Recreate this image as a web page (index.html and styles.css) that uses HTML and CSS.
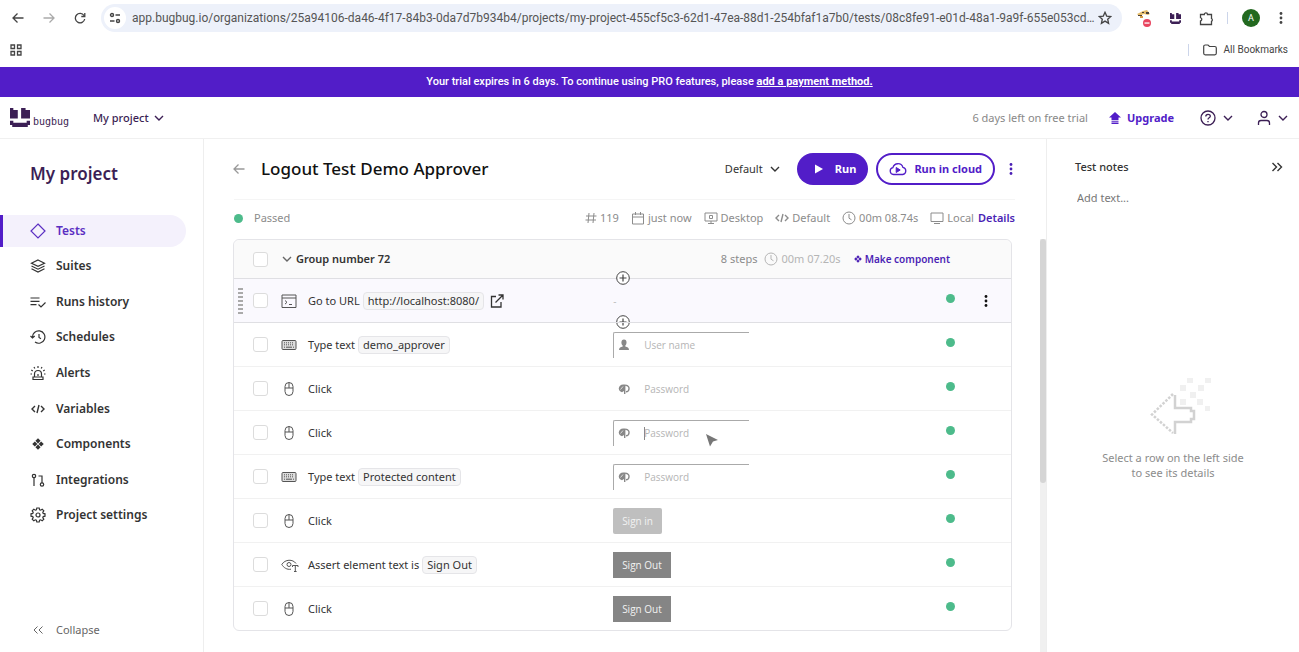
FILE: index.html
```html
<!DOCTYPE html>
<html lang="en">
<head>
<meta charset="utf-8">
<title>Logout Test Demo Approver - BugBug</title>
<link rel="stylesheet" href="styles.css">
</head>
<body>
<svg class="sprite" aria-hidden="true">
  <symbol id="i-chev" viewBox="0 0 10 10"><path stroke-width="1.400" d="M1 3l4 4 4-4"/></symbol>
  <symbol id="i-back" viewBox="0 0 12 12"><path stroke-width="1.300" d="M11.500 6H1M5.500 1.500L1 6l4.500 4.500"/></symbol>
  <symbol id="i-dots" viewBox="0 0 4 14"><g fill="currentColor" stroke="none"><circle cx="2" cy="2.500" r="1.400"/><circle cx="2" cy="7" r="1.400"/><circle cx="2" cy="11.500" r="1.400"/></g></symbol>
  <symbol id="i-clock" viewBox="0 0 14 14"><circle cx="7" cy="7" r="6"/><path d="M7 3v4.200l2.500 1.600"/></symbol>
  <symbol id="i-code" viewBox="0 0 14 14"><path stroke-width="1.400" d="M4 4L1 7l3 3M10 4l3 3-3 3M8 3L6 11"/></symbol>
  <symbol id="i-comp" viewBox="0 0 14 14"><g fill="currentColor" stroke="none"><path d="M7 .3l3 3-3 3-3-3zM7 7.700l3 3-3 3-3-3zM3.300 4l3 3-3 3-3-3zM10.700 4l3 3-3 3-3-3z"/></g></symbol>
  <symbol id="i-mouse" viewBox="0 0 16 16"><rect x="4" y="1.500" width="8" height="13" rx="4"/><path d="M4 7h8M8 1.500V7"/></symbol>
  <symbol id="i-key" viewBox="0 0 16 16"><rect x="1" y="3.500" width="14" height="9" rx="1" fill="#ddd"/><path stroke-dasharray="1 1" d="M3 5.800h10M3 7.800h10"/><path d="M3 10.200h1M5 10.200h6M12 10.200h1"/></symbol>
  <symbol id="i-pass" viewBox="0 0 12 12"><path fill="currentColor" stroke="none" d="M6 1.500C3 1 .8 3.300.8 5.500S2.500 9 4 9.200L6 8z"/><path stroke="#fff" stroke-width=".7" d="M2.500 6.500L5 3.500"/><path stroke-width="1.400" d="M6.700 1.500v9.500M7.500 2.300c3 .3 3.700 2 3.500 3.700S9.500 8.800 8 8.800"/></symbol>
  <symbol id="i-bug" viewBox="0 0 18 18"><g fill="currentColor" stroke="none"><path d="M0 0h3v2h4v8H0zM10 0h4v2h4v8h-8zM0 12h3v2h12v-2h3v4h-2v2H2v-2H0z"/></g></symbol>
  <symbol id="i-plus" viewBox="0 0 14 14"><circle cx="7" cy="7" r="6.300" fill="#fff"/><path stroke-width="1.200" d="M7 3.500v7M3.500 7h7"/></symbol>
</svg>

<div class="browser">
  <div class="toolbar">
    <button class="ico" aria-label="Back"><svg width="12" height="12"><use href="#i-back"/></svg></button>
    <button class="ico faded flip" aria-label="Forward"><svg width="12" height="12"><use href="#i-back"/></svg></button>
    <button class="ico" aria-label="Reload"><svg width="12" height="12" viewBox="0 0 12 12"><path stroke-width="1.300" d="M10 3.500A4.700 4.700 0 1 0 10.700 7M10.800 1v3.500H7.300"/></svg></button>
    <div class="omnibox">
      <button class="site" aria-label="Site information"><svg width="12" height="12" viewBox="0 0 12 12"><g stroke-width="1.400"><circle cx="3" cy="3" r="1.500"/><path d="M6.500 3H11M1 9h4.500"/><circle cx="9" cy="9" r="1.500"/></g></svg></button>
      <input class="url" aria-label="Address" value="app.bugbug.io/organizations/25a94106-da46-4f17-84b3-0da7d7b934b4/projects/my-project-455cf5c3-62d1-47ea-88d1-254bfaf1a7b0/tests/08c8fe91-e01d-48a1-9a9f-655e053cd…">
      <button aria-label="Bookmark"><svg width="14" height="14" viewBox="0 0 14 14"><path stroke-width="1.300" d="M7 1.300l1.700 3.800 4.100.4-3.100 2.700.9 4.100L7 10.100l-3.600 2.200.9-4.100L1.200 5.500l4.100-.4z"/></svg></button>
    </div>
    <div class="extensions">
      <button class="ico" aria-label="Blocked extension"><svg width="18" height="20" viewBox="0 0 18 20"><g stroke="none"><path d="M2 6l6-3 4-1 3 4-2 1-4-1-5 2z" fill="#e6bd6b"/><path d="M7 4h2v1H7zM11 4h3v2h-3zM3 7h4v1H3z" fill="#4a4038"/><path d="M5 8h3v2H5z" fill="#d79b45"/><circle cx="12" cy="15" r="4" fill="#e8455f"/><path d="M9.500 14.400h5v1.300h-5z" fill="#fff"/></g></svg></button>
      <button class="ico bug" aria-label="BugBug extension"><svg width="11" height="11"><use href="#i-bug"/></svg></button>
      <button class="ico" aria-label="Extensions"><svg width="15" height="15" viewBox="0 0 15 15"><path stroke-width="1.300" d="M1.500 3.500h3.800a1.600 1.600 0 0 1 3.200 0h4v4a1.600 1.600 0 0 1 0 2.800v3.200h-11V10a1.700 1.700 0 0 0 0-3.300z"/></svg></button>
      <i class="bar"></i>
      <button class="avatar" aria-label="Profile">A</button>
      <button class="ico" aria-label="Browser menu"><svg width="4" height="14"><use href="#i-dots"/></svg></button>
    </div>
  </div>
  <div class="bookmarks">
    <button class="ico" aria-label="Apps"><svg width="12" height="12" viewBox="0 0 12 12"><path stroke-width="1.300" d="M1 1h3.500v3.500H1zM7.500 1H11v3.500H7.500zM1 7.500h3.500V11H1zM7.500 7.500H11V11H7.500z"/></svg></button>
    <i class="bar"></i>
    <button class="folder"><svg width="14" height="12" viewBox="0 0 14 12"><path stroke-width="1.200" d="M.7 2.500a1.500 1.500 0 0 1 1.500-1.500H5l1.500 1.500h5.300a1.500 1.500 0 0 1 1.500 1.500v5.300a1.500 1.500 0 0 1-1.500 1.500H2.200a1.500 1.500 0 0 1-1.500-1.500z"/></svg>All Bookmarks</button>
  </div>
</div>

<div class="banner">Your trial expires in 6 days. To continue using PRO features, please <a href="#pay">add a payment method.</a></div>

<header class="top">
  <a class="logo" href="#home"><svg width="20" height="19" viewBox="0 0 18 18" preserveAspectRatio="none"><use href="#i-bug"/></svg><span>bugbug</span></a>
  <button class="project">My project <svg width="10" height="10"><use href="#i-chev"/></svg></button>
  <span class="trial">6 days left on free trial</span>
  <a class="upgrade" href="#upgrade"><svg width="12" height="12" viewBox="0 0 12 12"><path fill="currentColor" stroke="none" d="M6 0l6 5.500H9.500V8h-7V5.500H0zM2.500 8.700h7v1h-7zM2.500 10.500h7V12h-7z"/></svg>Upgrade</a>
  <button class="pair help" aria-label="Help"><svg width="16" height="16" viewBox="0 0 16 16"><g stroke-width="1.300"><circle cx="8" cy="8" r="7"/><path d="M5.800 6.500c0-3 4.500-2.800 4.500-.3C10.300 7.800 8 7.800 8 9.500M8 11v1.300"/></g></svg><svg width="10" height="10"><use href="#i-chev"/></svg></button>
  <button class="pair" aria-label="Account"><svg width="14" height="16" viewBox="0 0 14 16"><g stroke-width="1.300"><circle cx="7" cy="4.500" r="3"/><path d="M1.500 15v-2c0-1.500 1-2.500 2.500-2.500h6c1.500 0 2.500 1 2.500 2.500v2"/></g></svg><svg width="10" height="10"><use href="#i-chev"/></svg></button>
</header>

<div class="app">
  <aside class="side">
    <h2>My project</h2>
    <nav>
      <a class="on" href="#tests"><svg width="16" height="16" viewBox="0 0 16 16"><path d="M8 1l7 7-7 7-7-7z"/></svg>Tests</a>
      <a href="#suites"><svg width="16" height="16" viewBox="0 0 16 16"><path d="M8 2l6.500 3.200L8 8.400 1.500 5.200zM1.500 8L8 11.200 14.500 8M1.500 10.800L8 14l6.500-3.200"/></svg>Suites</a>
      <a href="#runs"><svg width="16" height="16" viewBox="0 0 16 16"><path d="M.5 4h9M.5 7.300h9M.5 10.600h6M8.500 10.500l2.500 2.500 4.500-4.500"/></svg>Runs history</a>
      <a href="#schedules"><svg width="16" height="16" viewBox="0 0 16 16"><path d="M2.500 8.500A6.200 6.200 0 1 1 5 13M.5 7l2 2 2.200-2M9 5v3.500l2 1.200"/></svg>Schedules</a>
      <a href="#alerts"><svg width="16" height="16" viewBox="0 0 16 16"><path d="M4.500 12V9a3.500 3.500 0 0 1 7 0v3M3 12h10v2.500H3zM8 9v2M8 1v2M4 2l.8 1.500M12 2l-.8 1.500M1.300 5l1.500 1M14.700 5l-1.500 1M.5 9H2M14 9h1.500"/></svg>Alerts</a>
      <a href="#variables"><svg width="16" height="14"><use href="#i-code"/></svg>Variables</a>
      <a href="#components"><svg width="16" height="12"><use href="#i-comp"/></svg>Components</a>
      <a href="#integrations"><svg width="16" height="16" viewBox="0 0 16 16"><circle cx="4" cy="4" r="1.700"/><path d="M4 6v8M8.500 4H12v7"/><circle cx="12" cy="12.500" r="1.700"/></svg>Integrations</a>
      <a href="#settings"><svg width="16" height="16" viewBox="0 0 16 16"><circle cx="8" cy="8" r="2"/><path d="M6.800 1h2.400l.4 1.800 1 .4 1.600-1 1.600 1.600-1 1.600.4 1 1.800.4v2.400l-1.800.4-.4 1 1 1.600-1.600 1.600-1.600-1-1 .4L9.200 15H6.800l-.4-1.800-1-.4-1.600 1-1.600-1.600 1-1.600-.4-1L1 9.200V6.800l1.800-.4.4-1-1-1.600 1.600-1.600 1.600 1 1-.4z"/></svg>Project settings</a>
    </nav>
    <button class="collapse"><svg width="16" height="10" viewBox="0 0 16 10"><path d="M7.500 1.500L4 5l3.500 3.500M12.500 1.500L9 5l3.500 3.500"/></svg>Collapse</button>
  </aside>

  <main class="main">
    <div class="title">
      <button class="ico back" aria-label="Go back"><svg width="12" height="12"><use href="#i-back"/></svg></button>
      <h1>Logout Test Demo Approver</h1>
      <label class="profile"><select aria-label="Run profile"><option>Default</option></select><svg width="10" height="10"><use href="#i-chev"/></svg></label>
      <button class="run"><svg width="9" height="10" viewBox="0 0 9 10"><path d="M1 .5L9 5 1 9.500z" fill="#fff" stroke="none"/></svg>Run</button>
      <button class="cloud"><svg width="18" height="14" viewBox="0 0 18 14"><path stroke-width="1.300" d="M4.500 12.500a3.500 3.500 0 0 1-.6-6.900 5.200 5.200 0 0 1 10-.2 3.600 3.600 0 0 1-.2 7.100z"/><path d="M7.200 5.500l4 2.500-4 2.500z" fill="currentColor"/></svg>Run in cloud</button>
      <button class="ico more" aria-label="More actions"><svg width="4" height="14"><use href="#i-dots"/></svg></button>
    </div>

    <div class="status">
      <i class="dot"></i><span class="passed">Passed</span>
      <span class="meta"><svg width="12" height="12" viewBox="0 0 12 12"><path d="M4 1L3 11M9 1L8 11M1 4h10.500M.5 8H11"/></svg>119</span>
      <span class="meta"><svg width="14" height="14" viewBox="0 0 14 14"><path d="M1.500 3h11v10h-11zM1.500 6h11M4.500 1v3M9.500 1v3"/></svg>just now</span>
      <span class="meta"><svg width="14" height="14" viewBox="0 0 14 14"><path d="M1 2h12v8H1zM7 10v2.500M4 12.500h6M5.500 4.500h3v3h-3z"/></svg>Desktop</span>
      <span class="meta"><svg width="14" height="14"><use href="#i-code"/></svg>Default</span>
      <span class="meta"><svg width="14" height="14"><use href="#i-clock"/></svg>00m 08.74s</span>
      <span class="meta"><svg width="14" height="14" viewBox="0 0 14 14"><path d="M1 2h12v8.500H1zM4 12.500h6"/></svg>Local</span>
      <a href="#details">Details</a>
    </div>

    <div class="scroll">
      <section class="card">
        <div class="group">
          <input type="checkbox" aria-label="Select group">
          <button class="toggle"><svg width="10" height="10"><use href="#i-chev"/></svg>Group number 72</button>
          <span class="count">8 steps</span>
          <span class="time"><svg width="14" height="14"><use href="#i-clock"/></svg>00m 07.20s</span>
          <button class="make"><svg width="8" height="8"><use href="#i-comp"/></svg>Make component</button>
        </div>
        <ul class="steps">
          <li class="hover">
            <button class="add before" aria-label="Add step before"><svg width="14" height="14"><use href="#i-plus"/></svg></button>
            <i class="grip"></i><input type="checkbox" aria-label="Select step 1">
            <svg width="16" height="16" viewBox="0 0 16 16"><path d="M1 2h14v12.500H1zM1 5h14M4 7.500l2 1.800-2 1.800M8 11.500h3"/></svg>
            <div class="what">Go to URL <code>http://localhost:8080/</code><a href="#open" aria-label="Open URL"><svg width="14" height="14" viewBox="0 0 14 14"><path stroke-width="1.300" d="M6 2.500H1.500v10.500H11V8M8.500 1H13v4.500M13 1L5.500 8.500"/></svg></a></div>
            <div class="shot"><span class="none">-</span></div><i class="dot"></i>
            <button class="ico kebab" aria-label="Step menu"><svg width="4" height="14"><use href="#i-dots"/></svg></button>
            <button class="add after" aria-label="Add step after"><svg width="14" height="14"><use href="#i-plus"/></svg></button>
          </li>
          <li><i></i><input type="checkbox" aria-label="Select step 2"><svg width="16" height="16"><use href="#i-key"/></svg><div class="what">Type text <code>demo_approver</code></div>
            <div class="shot"><span class="field framed"><svg width="12" height="12" viewBox="0 0 12 12"><path d="M6 .5c3.600 0 2.800 5 1.300 6v1c2 .5 3.700 1 3.700 3.500H1C1 8.500 2.700 8 4.700 7.500v-1C3.200 5.500 2.400.5 6 .5z" fill="currentColor" stroke="none"/></svg>User name</span></div><i class="dot"></i></li>
          <li><i></i><input type="checkbox" aria-label="Select step 3"><svg width="16" height="16"><use href="#i-mouse"/></svg><div class="what">Click</div>
            <div class="shot"><span class="field"><svg width="12" height="12"><use href="#i-pass"/></svg>Password</span></div><i class="dot"></i></li>
          <li><i></i><input type="checkbox" aria-label="Select step 4"><svg width="16" height="16"><use href="#i-mouse"/></svg><div class="what">Click</div>
            <div class="shot"><span class="field framed caret"><svg width="12" height="12"><use href="#i-pass"/></svg>Password</span><svg class="pointer" width="14" height="14" viewBox="0 0 14 14"><path d="M1 1l12 6-5 1.500-3 5z" fill="#777" stroke="none"/></svg></div><i class="dot"></i></li>
          <li><i></i><input type="checkbox" aria-label="Select step 5"><svg width="16" height="16"><use href="#i-key"/></svg><div class="what">Type text <code>Protected content</code></div>
            <div class="shot"><span class="field framed"><svg width="12" height="12"><use href="#i-pass"/></svg>Password</span></div><i class="dot"></i></li>
          <li><i></i><input type="checkbox" aria-label="Select step 6"><svg width="16" height="16"><use href="#i-mouse"/></svg><div class="what">Click</div>
            <div class="shot"><span class="thumb light">Sign in</span></div><i class="dot"></i></li>
          <li><i></i><input type="checkbox" aria-label="Select step 7"><svg width="18" height="16" viewBox="0 0 18 16"><path d="M10 12.200C6 13 2.500 10.500.8 7.500 4 2 12 2 15 6.500"/><circle cx="8" cy="7.500" r="2"/><path d="M11.500 10V8.500h5.500V10M14.300 8.500v6M13 14.500h2.600"/></svg><div class="what">Assert element text is <code>Sign Out</code></div>
            <div class="shot"><span class="thumb">Sign Out</span></div><i class="dot"></i></li>
          <li><i></i><input type="checkbox" aria-label="Select step 8"><svg width="16" height="16"><use href="#i-mouse"/></svg><div class="what">Click</div>
            <div class="shot"><span class="thumb">Sign Out</span></div><i class="dot"></i></li>
        </ul>
      </section>
      <div class="track"><div class="handle"></div></div>
    </div>
  </main>

  <aside class="notes">
    <div class="notes-head"><label for="notes">Test notes</label>
      <button class="ico" aria-label="Hide panel"><svg width="12" height="10" viewBox="0 0 12 10"><path stroke-width="1.400" d="M1.500 1l4 4-4 4M6.500 1l4 4-4 4"/></svg></button></div>
    <textarea id="notes" rows="1" placeholder="Add text..."></textarea>
    <div class="empty">
      <svg width="76" height="57" viewBox="-16 0 76 57"><g stroke="#d2d2d2" stroke-width="2.500"><path stroke-dasharray="2.500 1.500" d="M22 16L1 36.500 22 55"/><path d="M24 17v13h16v3h3v8h-3v3H24v12"/></g><path fill="#f0f0f0" stroke="none" d="M36 0h6v5h-6zM54 0h6v5h-6zM29 7h6v6h-6zM47 7h6v6h-6zM39 14h6v6h-6zM29 21h6v6h-6zM46 21h6v6h-6zM54 28h5v5h-5z"/></svg>
      <p>Select a row on the left side<br>to see its details</p>
    </div>
  </aside>
</div>
</body>
</html>
```

FILE: styles.css
```css
* { box-sizing: border-box; }
body {
  margin: 0;
  min-height: 100vh;
  display: flex;
  flex-direction: column;
  background: #fff;
  color: #333;
  font: 11px/16px "Noto Sans", "Open Sans", sans-serif;
}
svg { fill: none; stroke: currentColor; flex: none; display: block; }
.sprite { position: absolute; width: 0; height: 0; }
button, input, select, textarea { font: inherit; color: inherit; margin: 0; }
button { border: 0; padding: 0; background: none; display: flex; align-items: center; white-space: nowrap; }
a { color: inherit; text-decoration: none; }
h1, h2, p, ul { margin: 0; padding: 0; }
.ico { justify-content: center; width: 20px; height: 20px; flex: none; }

/* Browser chrome */
.browser { color: #444; font-family: Roboto, "Noto Sans", sans-serif; }
.toolbar { display: flex; align-items: center; height: 36px; padding: 0 8px; gap: 11px; }
.faded { color: #aaa; }
.flip svg { transform: scaleX(-1); }
.omnibox {
  flex: 1; min-width: 0; display: flex; align-items: center;
  height: 28px; padding: 0 10px 0 3px; background: #edf1fa; border-radius: 14px;
}
.site { width: 22px; height: 22px; margin-right: 6px; justify-content: center; border-radius: 50%; background: #fff; }
.url { flex: 1; min-width: 0; border: 0; padding: 0; background: none; font-size: 12px; color: #555; }
.extensions { display: flex; align-items: center; gap: 11px; padding-left: 1px; }
.extensions .bar { margin-right: 3px; }
.bug { color: #3c1f55; }
.bar { width: 1px; height: 12px; background: #ccd5ea; }
.avatar { width: 18px; height: 18px; justify-content: center; border-radius: 50%; background: #22691f; color: #fff; font-size: 9px; }
.bookmarks { display: flex; align-items: center; height: 31px; padding: 0 11px 4px 6px; gap: 14px; }
.bookmarks .bar { margin-left: auto; }
.folder { gap: 7px; font-size: 10px; }

.banner { padding: 7px 0; background: #521dc8; color: #fff; text-align: center; font-family: Roboto, "Noto Sans", sans-serif; font-weight: 500; }
.banner a { font-weight: 700; text-decoration: underline; }

.top { display: flex; align-items: center; height: 42px; padding: 0 11px 0 10px; border-bottom: 1px solid #f0f0f0; color: #3c1f55; }
.logo { display: flex; align-items: flex-end; gap: 3px; width: 61px; }
.logo span { font: 10px/10px "DejaVu Sans Mono", monospace; }
.project { gap: 5px; margin-left: 22px; font-weight: 500; }
.trial { margin-left: auto; color: #888; }
.upgrade { display: flex; align-items: center; gap: 6px; margin: 0 26px 0 21px; color: #521dc8; font-weight: 700; }
.pair { gap: 7px; }
.help { margin-right: 24px; }

.app { flex: 1; display: flex; }

/* Sidebar */
.side { display: flex; flex-direction: column; width: 204px; border-right: 1px solid #eee; }
.side h2 { padding: 23px 30px 27px; color: #3c1f55; font-size: 17px; line-height: 24px; font-weight: 600; }
.side nav { display: grid; grid-auto-rows: 1fr; align-items: center; height: 320px; }
.side nav a { display: flex; align-items: center; gap: 10px; height: 32px; width: 186px; padding-left: 30px; font-size: 12px; font-weight: 600; }
.side nav svg { stroke-width: 1.2; }
.side nav .on { padding-left: 27px; border-left: 3px solid #521dc8; border-radius: 0 16px 16px 0; background: #f4f1fc; color: #5b2fc2; }
.collapse { gap: 10px; margin-top: auto; padding: 12px 30px 14px; color: #666; }

/* Test view */
.main { flex: 1; min-width: 0; display: flex; flex-direction: column; }
.title { display: flex; align-items: center; height: 60px; margin: 0 27px 0 25px; }
.back { color: #999; }
.title h1 { margin: 0 auto 0 12px; color: #111; font-size: 17px; line-height: 24px; font-weight: 500; white-space: nowrap; }
.profile { display: flex; align-items: center; gap: 7px; margin-right: 17px; }
.profile select { appearance: none; border: 0; padding: 0; background: none; }
.run, .cloud { height: 32px; border-radius: 16px; font-weight: 700; }
.run { gap: 12px; padding: 0 12px 0 17px; background: #521dc8; color: #fff; }
.cloud { gap: 7px; margin-left: 8px; padding: 0 11px; border: 2px solid #521dc8; color: #521dc8; }
.more { width: 16px; margin-left: 8px; color: #4b1fb5; }
.status { display: flex; align-items: center; height: 40px; margin: 0 31px 0 30px; padding-bottom: 3px; border-top: 1px solid #f5f5f5; color: #8c8c8c; white-space: nowrap; }
.dot { width: 9px; height: 9px; border-radius: 50%; background: #4dbb8b; }
.passed { margin: 0 auto 0 11px; }
.meta { display: flex; align-items: center; gap: 3px; margin-right: 12px; }
.meta:nth-last-child(2) { margin-right: 4px; }
.status a { color: #4b1fb5; font-weight: 600; }

.scroll { flex: 1; display: flex; align-items: flex-start; gap: 28px; padding-left: 29px; }
.card { flex: 1; min-width: 0; border: 1px solid #e4e4e8; border-radius: 6px; }
.group { display: flex; align-items: center; height: 38px; padding: 0 61px 0 19px; background: #fafafa; border-radius: 6px 6px 0 0; }
.toggle { gap: 4px; margin: 0 auto 0 14px; font-weight: 600; }
.toggle svg { color: #666; }
.count, .time { color: #8c8c8c; }
.time { display: flex; gap: 4px; align-items: center; margin: 0 13px 0 6px; color: #b5b5b5; }
.make { gap: 3px; color: #4b1fb5; font-weight: 600; font-size: 10px; }
input[type="checkbox"] { appearance: none; width: 15px; height: 15px; border: 1px solid #dcdcdc; border-radius: 3px; background: #fff; }
.steps { list-style: none; }
.steps li {
  position: relative; display: grid; align-items: center;
  grid-template-columns: 19px 28px 27px 11fr 12fr 24px 32px;
  height: 44px; padding-right: 9px; border-top: 1px solid #f1f1f1;
}
.steps li.hover { border-top-color: #dfdfe3; background: #faf9fe; }
.steps li.hover + li { border-top-color: #dfdfe3; }
.steps li > svg { color: #555; }
.grip { width: 5px; height: 26px; margin-left: 4px; background: repeating-linear-gradient(#aaa 0 2px, transparent 2px 4px); }
.what { display: flex; align-items: center; white-space: nowrap; }
.what code { margin: 0 6px 0 3px; padding: 0 4px; border: 1px solid #e5e5e8; border-radius: 4px; background: #f6f6f7; font: inherit; }
.steps li > .dot { margin-bottom: 4px; }
.kebab { width: 32px; color: #111; }
.add { position: absolute; left: 382px; color: #444; }
.before { top: -8px; }
.after { bottom: -7px; }
.none { color: #bbb; font-size: 10px; }
.shot { position: relative; font: 10px/14px "Open Sans", sans-serif; color: #b5b5b5; }
.field { display: flex; align-items: center; gap: 14px; width: 136px; height: 26px; padding-left: 4px; border: 1px solid transparent; border-width: 1px 0 0 1px; }
.field svg { color: #888; }
.framed { border-color: #aaa; border-top-left-radius: 2px; }
.caret { background: linear-gradient(#888, #888) 30px 6px / 1px 13px no-repeat; }
.pointer { position: absolute; left: 92px; top: 13px; }
.thumb { display: inline-block; padding: 6px 9px; background: #858585; color: #f2f2f2; vertical-align: top; }
.thumb.light { background: #bfbfbf; border-radius: 2px; }
.track { align-self: stretch; width: 6px; background: #f0f0f0; }
.handle { height: 244px; border-radius: 3px; background: #d5d5d5; }

/* Notes panel */
.notes { display: flex; flex-direction: column; width: 253px; border-left: 1px solid #eee; }
.notes-head { display: flex; justify-content: space-between; align-items: center; padding: 18px 12px 0 28px; font-weight: 500; }
.notes textarea { margin: 13px 12px 0 30px; padding: 0; border: 0; resize: none; overflow: hidden; }
.notes textarea::placeholder { color: #777; opacity: 1; }
.empty { flex: 1; display: flex; flex-direction: column; align-items: center; justify-content: center; gap: 15px; color: #8c8c8c; line-height: 15px; text-align: center; }
```
